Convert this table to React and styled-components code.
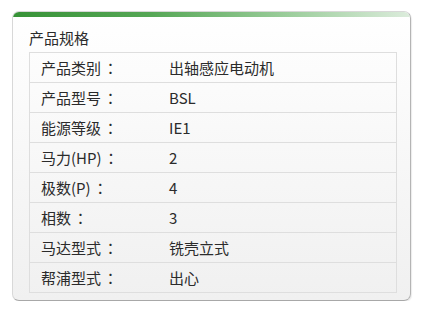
import React from 'react';
import styled, { createGlobalStyle } from 'styled-components';

const GlobalStyle = createGlobalStyle`
    html, body {
        margin: 0;
        padding: 0;
        background: #ffffff;
    }
    body {
        font-family: "Noto Sans CJK SC", "Noto Sans", sans-serif;
        color: #2b2b2b;
    }
`;

const Page = styled.div`
    padding: 11px 12px 0 12px;
`;

const Card = styled.div`
    width: 397px;
    height: 288px;
    border: 1px solid #d8d8d8;
    border-right-color: #b4b4b4;
    border-bottom-color: #a8a8a8;
    border-radius: 7px;
    background: linear-gradient(180deg, #ffffff 0%, #f9f9f9 40%, #f0f0f0 100%);
    box-shadow: 1px 1px 1px rgba(0, 0, 0, 0.08);
    overflow: hidden;
    display: flex;
    flex-direction: column;
`;

const Band = styled.div`
    height: 5px;
    background: linear-gradient(90deg, #379237 0%, #56a756 35%, #9dce9d 70%, #dcecdc 100%);
`;

const Body = styled.div`
    padding: 11px 12px 0 16px;
`;

const Title = styled.h3`
    margin: 0 0 4px 0;
    font-size: 15px;
    font-weight: normal;
    line-height: 20px;
    color: #2b2b2b;
`;

const Table = styled.table`
    width: 368px;
    border-collapse: collapse;
    font-size: 15px;
`;

const Cell = styled.td`
    height: 29px;
    padding: 0 0 0 ${({ value }) => (value ? '0' : '11px')};
    width: ${({ value }) => (value ? 'auto' : '128px')};
    border-top: 1px solid #dedede;
    border-bottom: 1px solid #dedede;
    border-left: ${({ value }) => (value ? 'none' : '1px solid #dedede')};
    border-right: ${({ value }) => (value ? '1px solid #dedede' : 'none')};
    color: #2b2b2b;
    line-height: 20px;
    white-space: nowrap;
`;

const Colon = styled.span`
    display: inline-block;
    width: 15px;
    margin-left: 2px;
    text-align: center;
    font-family: "Noto Sans CJK JP", "Noto Sans CJK SC", sans-serif;
`;

const specs = [
    ['产品类别', '出轴感应电动机'],
    ['产品型号', 'BSL'],
    ['能源等级', 'IE1'],
    ['马力(HP)', '2'],
    ['极数(P)', '4'],
    ['相数', '3'],
    ['马达型式', '铣壳立式'],
    ['帮浦型式', '出心'],
];

export default function App() {
    return (
        <>
            <GlobalStyle />
            <Page>
                <Card>
                    <Band />
                    <Body>
                        <Title>产品规格</Title>
                        <Table>
                            <tbody>
                                {specs.map(([label, val]) => (
                                    <tr key={label}>
                                        <Cell>
                                            {label}
                                            <Colon>：</Colon>
                                        </Cell>
                                        <Cell value>{val}</Cell>
                                    </tr>
                                ))}
                            </tbody>
                        </Table>
                    </Body>
                </Card>
            </Page>
        </>
    );
}
